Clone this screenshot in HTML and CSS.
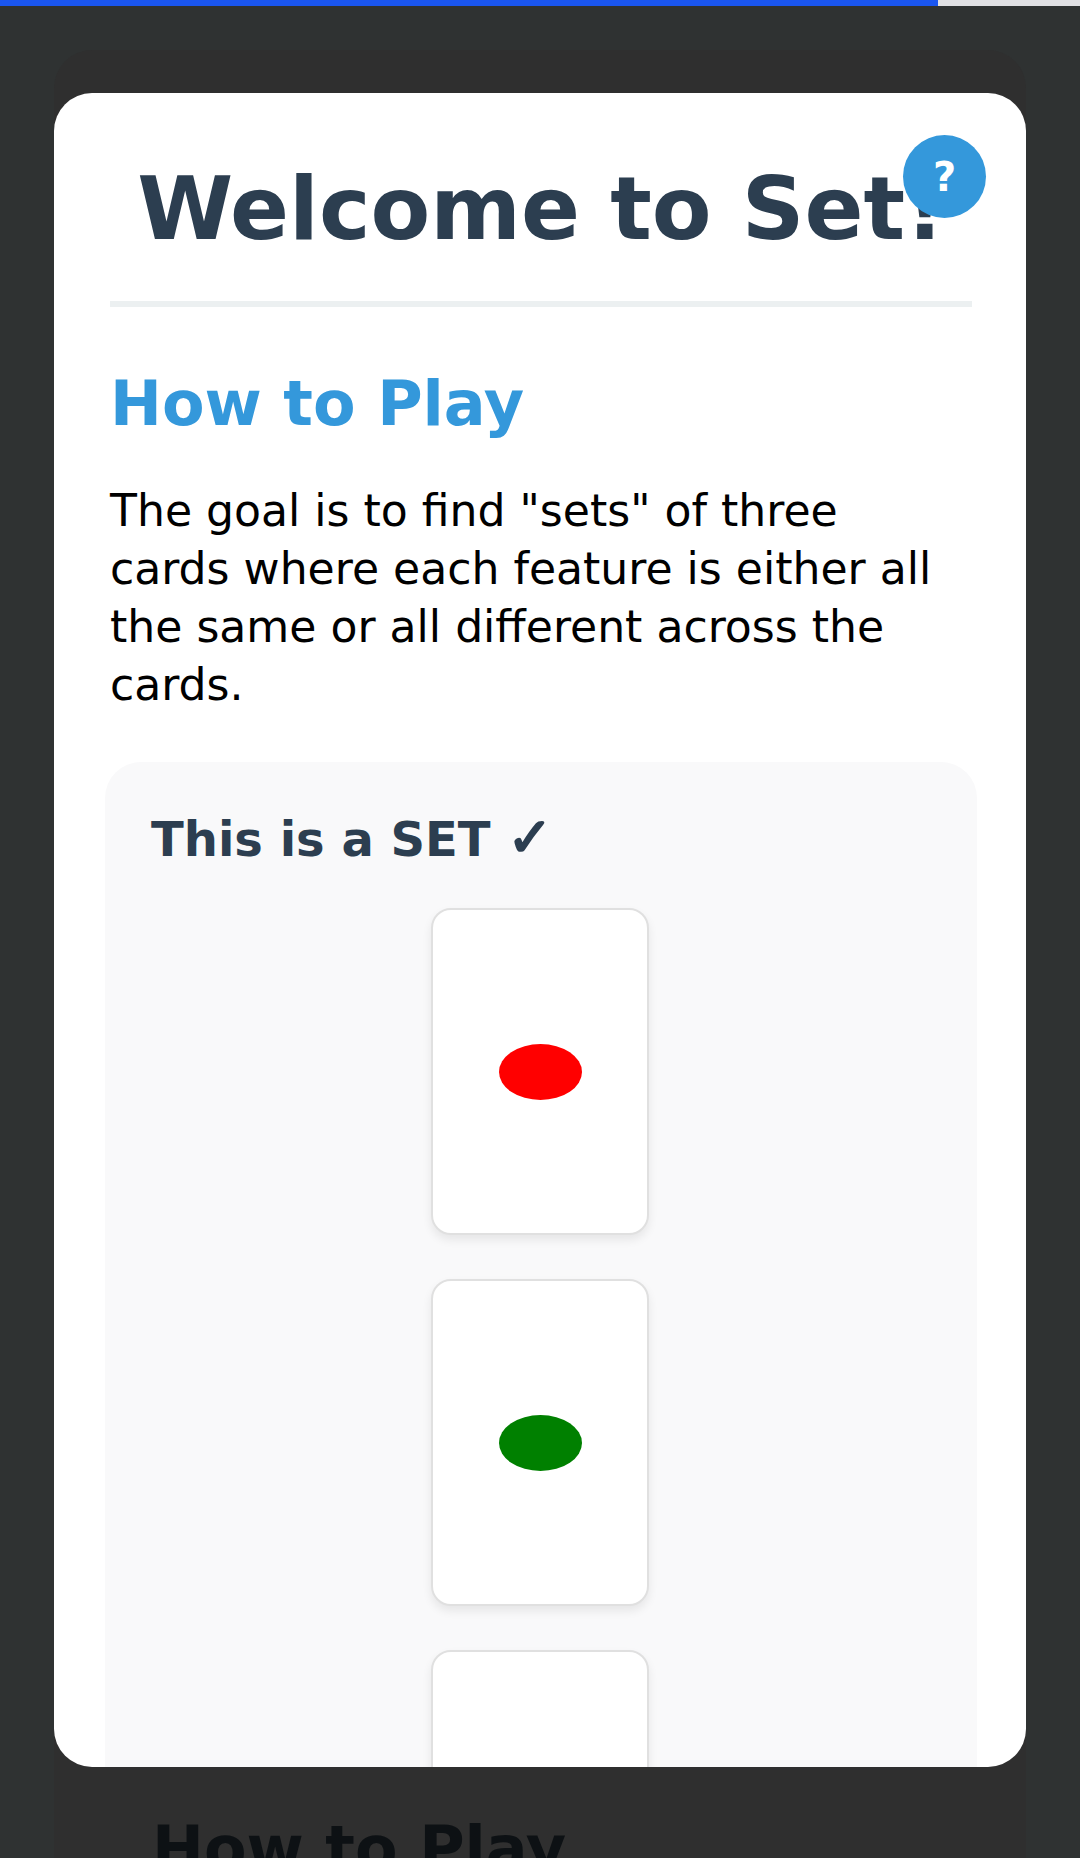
FILE: index.html
```html
<!DOCTYPE html>
<html lang="en">
<head>
    <meta charset="UTF-8">
    <meta name="viewport" content="width=device-width, initial-scale=1.0">
    <title>Welcome to Set!</title>
    <link rel="stylesheet" href="styles.css">
</head>
<body>
    <div class="progress-bar"><div class="progress-fill"></div></div>

    <!-- page behind the dialog -->
    <main class="game-page">
        <h2 class="game-heading">How to Play</h2>
    </main>

    <div class="modal-overlay">
        <div class="modal">
            <button class="help-button">?</button>
            <h1>Welcome to Set!</h1>
            <h2>How to Play</h2>
            <p>The goal is to find "sets" of three cards where each feature is either all the same or all different across the cards.</p>
            <section class="example">
                <h3>This is a SET <span class="check">✓</span></h3>
                <div class="card-list">
                    <div class="card"><span class="shape shape-red"></span></div>
                    <div class="card"><span class="shape shape-green"></span></div>
                    <div class="card"></div>
                </div>
            </section>
        </div>
    </div>
</body>
</html>
```

FILE: styles.css
```css
* {
    box-sizing: border-box;
}
html, body {
    height: 100%;
}
body {
    margin: 0;
    position: relative;
    overflow: hidden;
    font-family: "DejaVu Sans", Verdana, sans-serif;
    background-color: #2f3232;
}
.progress-bar {
    height: 6px;
    background-color: #e0e0e4;
}
.progress-fill {
    width: 938px;
    height: 100%;
    background-color: #1a56f0;
}
.game-page {
    margin: 44px 54px 0;
    height: 1808px;
    padding-top: 1764px;
    padding-left: 98px;
    border-radius: 38px 38px 0 0;
    background-color: #2f2f2f;
}
.game-heading {
    margin: 0;
    font-size: 62px;
    line-height: 70px;
    color: #0d1114;
}
.modal-overlay {
    position: absolute;
    top: 93px;
    left: 54px;
    width: 972px;
    height: 1674px;
}
.modal {
    position: relative;
    height: 100%;
    overflow: hidden;
    padding: 65px 54px 0 56px;
    border-radius: 38px;
    background-color: #fff;
}
.help-button {
    position: absolute;
    top: 42px;
    right: 40px;
    width: 83px;
    height: 83px;
    padding: 0;
    border: none;
    border-radius: 50%;
    background-color: #3498db;
    color: #fff;
    font-family: "DejaVu Sans", Verdana, sans-serif;
    font-size: 40px;
    font-weight: bold;
}
h1 {
    margin: 0 0 62px;
    padding-bottom: 41px;
    border-bottom: 6px solid #ecf0f1;
    font-size: 87px;
    line-height: 102px;
    text-align: center;
    color: #2c3e50;
}
h2 {
    margin: 0 0 43px;
    font-size: 62px;
    line-height: 70px;
    color: #3498db;
}
p {
    max-width: 835px;
    margin: 0 0 48px;
    font-size: 44.1px;
    line-height: 58px;
    color: #000;
}
.example {
    margin: 0 -5px;
    padding: 48px 48px 48px 46px;
    border-radius: 36px;
    background-color: #f9f9fa;
}
h3 {
    margin: 0 0 41px;
    font-size: 48px;
    line-height: 56px;
    color: #2c3e50;
}
.check {
    font-size: 54px;
    -webkit-text-stroke: 2px #2c3e50;
}
.card-list {
    display: flex;
    flex-direction: column;
    align-items: center;
    gap: 44px;
}
.card {
    display: flex;
    align-items: center;
    justify-content: center;
    flex-shrink: 0;
    width: 218px;
    height: 327px;
    border: 2px solid #e0e0e0;
    border-radius: 20px;
    background-color: #fff;
    box-shadow: 0 5px 10px rgba(0, 0, 0, 0.08);
}
.shape {
    width: 83px;
    height: 56px;
    border-radius: 50%;
}
.shape-red {
    background-color: #f00;
}
.shape-green {
    background-color: #008000;
}
```
